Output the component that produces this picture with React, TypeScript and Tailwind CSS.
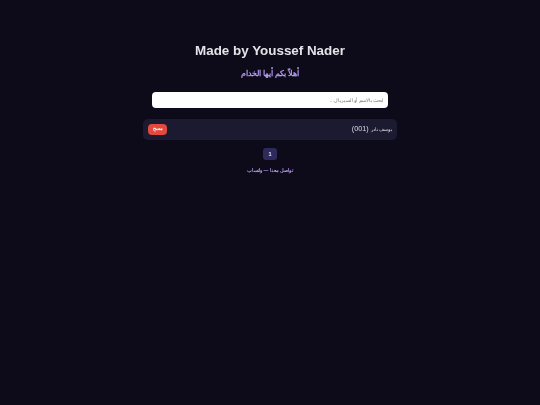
export default function App() {
  return (
    <main dir="rtl" className="min-h-[405px] bg-[#0d0b1a] font-['Liberation_Sans',sans-serif]">
      <div className="pt-[41px] will-change-transform">
        <h1 dir="ltr" className="text-center text-[13.4px] leading-[20px] font-bold text-[#e4e4e8]">Made by Youssef Nader</h1>
        <h2 className="mt-[7px] text-center text-[8px] leading-[12px] font-bold text-[#b79cf0]">أهلاً بكم أيها الخدام</h2>
        <div className="mx-auto mt-[12px] w-[236px]">
          <input
            readOnly
            placeholder="ابحث بالاسم أو السيريال..."
            className="block h-[16px] w-full rounded-[4px] bg-white px-[5px] text-[5px] outline-none placeholder:text-[#777777]"
          />
        </div>
        <div className="mx-auto mt-[11px] flex h-[21px] w-[254px] items-center justify-between rounded-[5px] bg-[#1c1a30] px-[5px]">
          <span className="text-[7.2px] text-[#dcdce4]"><span className="text-[5px]">يوسف نادر</span> (001)</span>
          <button className="flex h-[11px] w-[19px] items-center justify-center rounded-[4px] bg-[#e2493f] text-[4.5px] font-bold text-white">مسح</button>
        </div>
        <div className="mt-[8px] flex justify-center">
          <button className="h-[12px] w-[14px] rounded-[3px] bg-[#2e2a5c] text-[5.5px] font-bold text-[#e8e8f0]">1</button>
        </div>
        <p className="mt-[7px] text-center text-[4.8px] leading-[7px] font-bold text-[#b9a0ea]">تواصل معنا — واتساب</p>
      </div>
    </main>
  )
}
